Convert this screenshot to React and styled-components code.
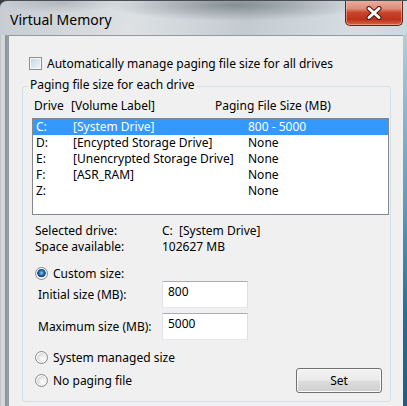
import styled, { createGlobalStyle } from "styled-components";

const Global = createGlobalStyle`
  html, body {
    margin: 0;
    padding: 0;
    background: #3a3d40;
  }
  body {
    font-family: "Noto Sans", "DejaVu Sans", sans-serif;
    font-size: 12px;
    color: #000;
  }
`;

const Window = styled.div`
  width: 407px;
  height: 406px;
  overflow: hidden;
  border-top-left-radius: 7px;
  display: flex;
  flex-direction: column;
  background:
    radial-gradient(ellipse 130px 16px at 235px 4px, rgba(80, 90, 100, 0.55), transparent),
    radial-gradient(ellipse 60px 10px at 60px 2px, rgba(120, 128, 136, 0.35), transparent),
    linear-gradient(100deg, #c6ccd1 0%, #dde1e4 28%, #c4cbd0 52%, #d6dde2 74%, #bcd3de 100%);
  border-top: 1px solid #4a4e52;
`;

const TitleBar = styled.div`
  height: 34px;
  display: flex;
  justify-content: space-between;
  padding: 0 4px 0 10px;
`;

const Title = styled.div`
  font-size: 14px;
  line-height: 18px;
  margin-top: 10px;
  color: #000;
`;

const CloseButton = styled.div`
  width: 56px;
  height: 25px;
  margin-top: -1px;
  border: 1px solid #6a2117;
  border-top: none;
  border-radius: 0 0 5px 5px;
  display: flex;
  align-items: center;
  justify-content: center;
  background: linear-gradient(
    180deg,
    #eab0a3 0%,
    #de8b78 35%,
    #c8452c 50%,
    #bd3219 78%,
    #d6674a 100%
  );
  box-shadow: inset 0 0 0 1px rgba(255, 210, 200, 0.45);
`;

const Body = styled.div`
  flex: 1;
  display: flex;
`;

const LeftFrame = styled.div`
  width: 8px;
  background: linear-gradient(
    90deg,
    #b9bec2 0,
    #dadde0 2px,
    #cfd3d6 5px,
    #8d9296 5px,
    #9a9fa3 8px
  );
`;

const RightFrame = styled.div`
  width: 4px;
  background: linear-gradient(180deg, #b5ccd8 0%, #5f9cbf 45%, #2a6d98 75%, #1f5d87 100%);
`;

const Client = styled.div`
  width: 394px;
  background: #f0f0f0;
  border-top: 1px solid #8e9aa4;
  border-left: 1px solid #8e9aa4;
  display: flex;
  flex-direction: column;
`;

const CheckRow = styled.label`
  margin-top: 21px;
  height: 13px;
  padding-left: 20px;
  display: flex;
  align-items: center;
  gap: 5px;
  line-height: 16px;
`;

const CheckBox = styled.span`
  width: 11px;
  height: 11px;
  border: 1px solid #8e8f8f;
  background: linear-gradient(135deg, #c6d5e6 0%, #dde7f2 55%, #f1f5fa 100%);
  box-shadow: inset 0 0 0 1px #f4f6f8;
  flex-shrink: 0;
`;

const Group = styled.div`
  position: relative;
  margin: 16px 0 0 13px;
  width: 369px;
  height: 316px;
  box-sizing: border-box;
  border: 1px solid #d5dfe5;
  border-radius: 3px;
  display: flex;
  flex-direction: column;
`;

const Legend = styled.span`
  position: absolute;
  top: -10px;
  left: 5px;
  padding: 0 2px;
  line-height: 16px;
  background: #f0f0f0;
`;

const HeaderRow = styled.div`
  margin-top: 11px;
  height: 16px;
  line-height: 16px;
  padding-left: 11px;
  display: flex;
`;

const Col = styled.span`
  width: ${(p) => p.$w}px;
  flex-shrink: 0;
  white-space: nowrap;
`;

const ListBox = styled.div`
  margin: 4px 0 0 9px;
  width: 357px;
  height: 97px;
  box-sizing: border-box;
  border: 1px solid #828790;
  background: #fff;
`;

const DriveRow = styled.div`
  height: 16px;
  line-height: 16px;
  padding-left: 3px;
  display: flex;
  background: ${(p) => (p.$selected ? "#3399ff" : "transparent")};
  color: ${(p) => (p.$selected ? "#fff" : "#000")};
`;

const InfoBlock = styled.div`
  margin-top: 8px;
  padding-left: 12px;
  display: flex;
  flex-direction: column;
`;

const InfoRow = styled.div`
  height: 16px;
  line-height: 16px;
  display: flex;
`;

const RadioRow = styled.label`
  margin-top: ${(p) => p.$top}px;
  height: 15px;
  padding-left: 12px;
  display: flex;
  align-items: center;
  gap: 5px;
  line-height: 16px;
`;

const Radio = styled.span`
  width: 11px;
  height: 11px;
  border-radius: 50%;
  border: 1px solid #8a8a8a;
  flex-shrink: 0;
  background: ${(p) =>
    p.$checked
      ? "radial-gradient(circle at 50% 45%, #8fd3fa 0, #3c8fd6 1.5px, #1c5e9f 3px, #173f6e 4px, #e6e6e6 4.6px, #f6f6f6 6px)"
      : "radial-gradient(circle at 62% 62%, #ffffff 0, #eeeeee 3px, #d9d9d9 5.5px, #f4f4f4 6px)"};
  box-shadow: inset 0 0 0 1px #f8f8f8;
`;

const SizeRow = styled.div`
  margin-top: ${(p) => p.$top}px;
  height: 27px;
  padding-left: 15px;
  display: flex;
  align-items: center;
`;

const SizeLabel = styled.span`
  width: 124px;
  line-height: 16px;
`;

const SizeInput = styled.div`
  width: 86px;
  height: 27px;
  box-sizing: border-box;
  background: #fff;
  border: 1px solid;
  border-color: #abadb3 #dbdfe6 #e3e9ef #e2e3ea;
  padding: 2px 5px;
  line-height: 16px;
`;

const BottomRow = styled.div`
  margin-top: 3px;
  height: 25px;
  padding: 0 8px 0 12px;
  display: flex;
  align-items: center;
  justify-content: space-between;
`;

const InlineRadio = styled.label`
  display: flex;
  align-items: center;
  gap: 5px;
  line-height: 16px;
`;

const Button = styled.div`
  width: 86px;
  height: 25px;
  box-sizing: border-box;
  border: 1px solid #707070;
  border-radius: 3px;
  background: linear-gradient(180deg, #f2f2f2 0%, #ebebeb 48%, #dddddd 52%, #cfcfcf 100%);
  box-shadow: inset 0 0 0 1px #fbfbfb;
  display: flex;
  align-items: center;
  justify-content: center;
  line-height: 16px;
`;

const drives = [
  { letter: "C:", label: "[System Drive]", size: "800 - 5000", selected: true },
  { letter: "D:", label: "[Encypted Storage Drive]", size: "None" },
  { letter: "E:", label: "[Unencrypted Storage Drive]", size: "None" },
  { letter: "F:", label: "[ASR_RAM]", size: "None" },
  { letter: "Z:", label: "", size: "None" },
];

function CloseGlyph() {
  return (
    <svg width="18" height="14" viewBox="0 0 18 14">
      <path d="M4 2.5 L14 11.5 M14 2.5 L4 11.5" stroke="#4a1510" strokeWidth="5" strokeLinecap="round" />
      <path d="M4 2.5 L14 11.5 M14 2.5 L4 11.5" stroke="#ffffff" strokeWidth="3" strokeLinecap="round" />
    </svg>
  );
}

export default function App() {
  return (
    <>
      <Global />
      <Window>
        <TitleBar>
          <Title>Virtual Memory</Title>
          <CloseButton>
            <CloseGlyph />
          </CloseButton>
        </TitleBar>
        <Body>
          <LeftFrame />
          <Client>
            <CheckRow>
              <CheckBox />
              <span>Automatically manage paging file size for all drives</span>
            </CheckRow>
            <Group>
              <Legend>Paging file size for each drive</Legend>
              <HeaderRow>
                <Col $w={37}>Drive</Col>
                <Col $w={144}>[Volume Label]</Col>
                <Col $w={160}>Paging File Size (MB)</Col>
              </HeaderRow>
              <ListBox>
                {drives.map((d) => (
                  <DriveRow key={d.letter} $selected={d.selected}>
                    <Col $w={37}>{d.letter}</Col>
                    <Col $w={175}>{d.label}</Col>
                    <Col $w={100}>{d.size}</Col>
                  </DriveRow>
                ))}
              </ListBox>
              <InfoBlock>
                <InfoRow>
                  <Col $w={127}>Selected drive:</Col>
                  <span>C:&nbsp;&nbsp;[System Drive]</span>
                </InfoRow>
                <InfoRow>
                  <Col $w={127}>Space available:</Col>
                  <span>102627 MB</span>
                </InfoRow>
              </InfoBlock>
              <RadioRow $top={11}>
                <Radio $checked />
                <span>Custom size:</span>
              </RadioRow>
              <SizeRow $top={0}>
                <SizeLabel>Initial size (MB):</SizeLabel>
                <SizeInput>800</SizeInput>
              </SizeRow>
              <SizeRow $top={5}>
                <SizeLabel>Maximum size (MB):</SizeLabel>
                <SizeInput>5000</SizeInput>
              </SizeRow>
              <RadioRow $top={10}>
                <Radio />
                <span>System managed size</span>
              </RadioRow>
              <BottomRow>
                <InlineRadio>
                  <Radio />
                  <span>No paging file</span>
                </InlineRadio>
                <Button>Set</Button>
              </BottomRow>
            </Group>
          </Client>
          <RightFrame />
        </Body>
      </Window>
    </>
  );
}
